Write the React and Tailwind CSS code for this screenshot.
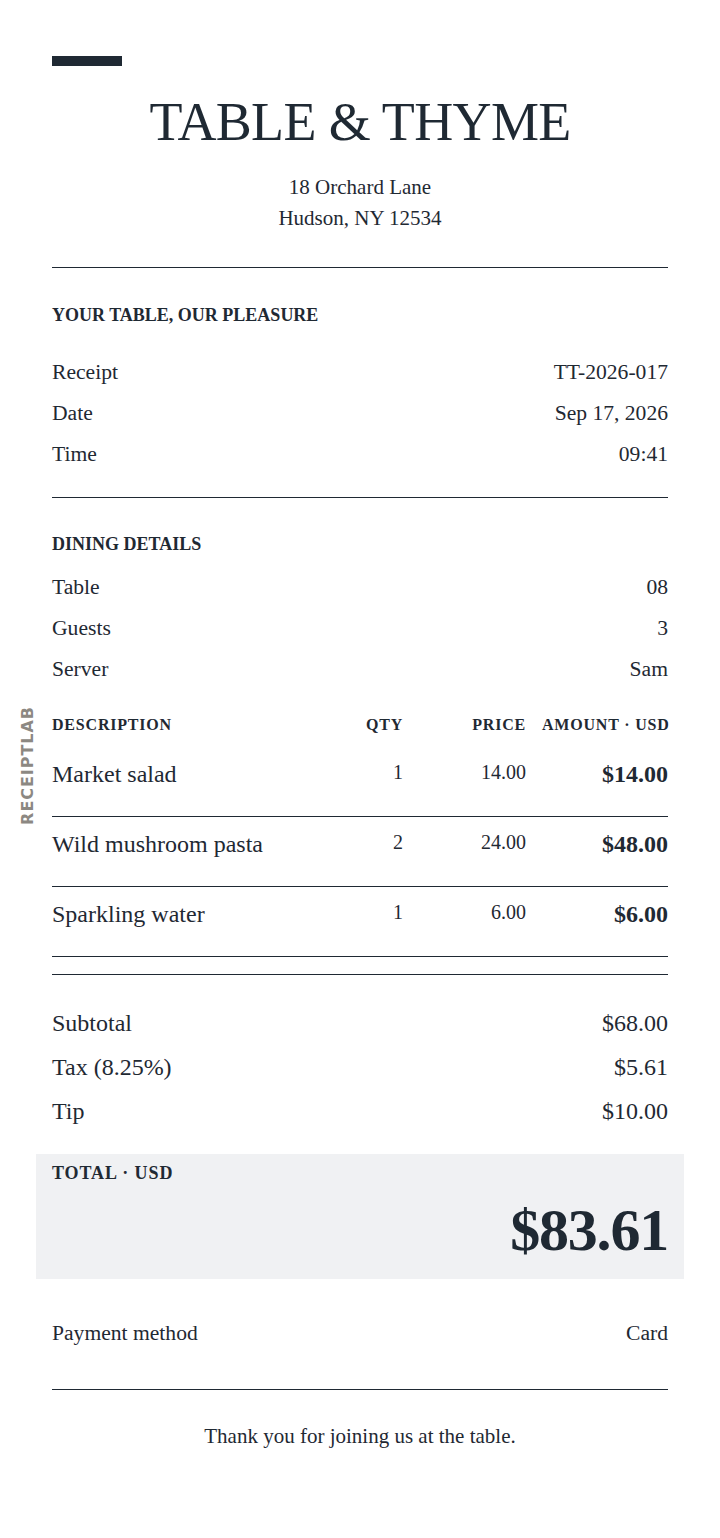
const font = { fontFamily: '"Liberation Serif", "Times New Roman", serif' }

function Row({ label, value }) {
  return (
    <div className="flex h-[41px] items-center justify-between text-[21.6px] leading-[41px]">
      <span>{label}</span>
      <span>{value}</span>
    </div>
  )
}

function Item({ name, qty, price, amount }) {
  return (
    <div className="grid grid-cols-[1fr_80px_107px_126px] items-start gap-x-4 border-b border-[#1f2933] pt-3 pb-[27px]">
      <div className="text-[24px] leading-[30px]">{name}</div>
      <div className="text-right text-[20px] leading-[26px]">{qty}</div>
      <div className="text-right text-[20px] leading-[26px]">{price}</div>
      <div className="text-right text-[24px] font-bold leading-[30px]">{amount}</div>
    </div>
  )
}

function SumRow({ label, value }) {
  return (
    <div className="flex h-[44px] items-center justify-between text-[24px] leading-[44px]">
      <span>{label}</span>
      <span>{value}</span>
    </div>
  )
}

export default function App() {
  return (
    <div className="min-h-[1538px] w-full bg-white text-[#1f2933]" style={font}>
      <div className="relative px-[52px] pt-[56px] pb-[80px]">
        <div className="h-[10px] w-[70px] bg-[#1f2933]"></div>

        <h1 className="mt-[29px] text-center text-[54px] leading-none tracking-[-0.012em]">TABLE &amp; THYME</h1>
        <div className="mt-[23px] text-center text-[21px] leading-[31px]">
          <div>18 Orchard Lane</div>
          <div>Hudson, NY 12534</div>
        </div>

        <div className="mt-[33px] border-t border-[#1f2933]"></div>

        <div className="mt-[38px] text-[18px] font-bold leading-none">YOUR TABLE, OUR PLEASURE</div>
        <div className="mt-[28px]">
          <Row label="Receipt" value="TT-2026-017" />
          <Row label="Date" value="Sep 17, 2026" />
          <Row label="Time" value="09:41" />
        </div>

        <div className="mt-[22px] border-t border-[#1f2933]"></div>

        <div className="mt-[37px] text-[18px] font-bold leading-none">DINING DETAILS</div>
        <div className="mt-[14px]">
          <Row label="Table" value="08" />
          <Row label="Guests" value="3" />
          <Row label="Server" value="Sam" />
        </div>

        <div className="relative mt-[27px]">
          <div
            className="absolute top-[-11px] left-[-32px] rotate-180 text-[16px] font-bold leading-none tracking-[0.06em] text-[#8c8882] [writing-mode:vertical-rl]"
            style={{ fontFamily: '"DejaVu Sans", sans-serif' }}
          >
            RECEIPTLAB
          </div>
          <div className="mb-[14px] grid grid-cols-[1fr_80px_107px_126px] gap-x-4 text-[16px] font-bold leading-none tracking-[0.05em]">
            <div>DESCRIPTION</div>
            <div className="text-right">QTY</div>
            <div className="text-right">PRICE</div>
            <div className="text-right whitespace-nowrap">AMOUNT · USD</div>
          </div>
          <Item name="Market salad" qty="1" price="14.00" amount="$14.00" />
          <Item name="Wild mushroom pasta" qty="2" price="24.00" amount="$48.00" />
          <Item name="Sparkling water" qty="1" price="6.00" amount="$6.00" />
          <div className="mt-[17px] border-t border-[#1f2933]"></div>
        </div>

        <div className="mt-[26px]">
          <SumRow label="Subtotal" value="$68.00" />
          <SumRow label="Tax (8.25%)" value="$5.61" />
          <SumRow label="Tip" value="$10.00" />
        </div>

        <div className="-mx-4 mt-[21px] bg-[#f0f1f3] px-4 pt-[10px] pb-[19px]">
          <div className="text-[18px] font-bold leading-none tracking-[0.05em]">TOTAL · USD</div>
          <div className="mt-[18px] text-right text-[60px] font-bold leading-none tracking-[-0.02em]">$83.61</div>
        </div>

        <div className="mt-[34px]">
          <Row label="Payment method" value="Card" />
        </div>

        <div className="mt-[35px] border-t border-[#1f2933]"></div>

        <p className="mt-[31px] text-center text-[21px] leading-[31px]">Thank you for joining us at the table.</p>
      </div>
    </div>
  )
}
